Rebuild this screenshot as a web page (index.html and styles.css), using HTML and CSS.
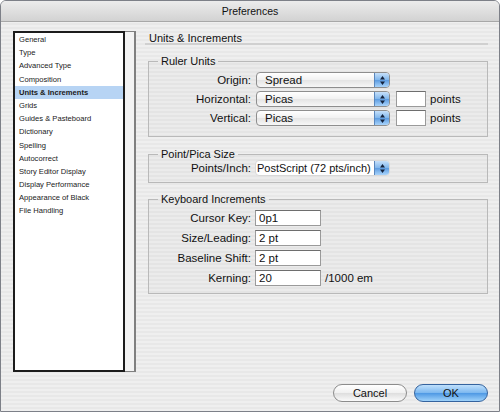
FILE: index.html
```html
<!DOCTYPE html>
<html lang="en">
<head>
    <meta charset="UTF-8">
    <title>Preferences</title>
    <link rel="stylesheet" href="styles.css">
</head>
<body>
<div class="window">
    <div class="titlebar">Preferences</div>

    <div class="content">
        <!-- Список разделов -->
        <div class="sidebar">
            <ul class="list">
                <li>General</li>
                <li>Type</li>
                <li>Advanced Type</li>
                <li>Composition</li>
                <li class="selected">Units &amp; Increments</li>
                <li>Grids</li>
                <li>Guides &amp; Pasteboard</li>
                <li>Dictionary</li>
                <li>Spelling</li>
                <li>Autocorrect</li>
                <li>Story Editor Display</li>
                <li>Display Performance</li>
                <li>Appearance of Black</li>
                <li>File Handling</li>
            </ul>
            <div class="gutter"></div>
        </div>

        <div class="panel">
            <h2 class="panel-title">Units &amp; Increments</h2>

            <fieldset class="group ruler">
                <legend>Ruler Units</legend>
                <div class="row">
                    <label>Origin:</label>
                    <div class="popup"><span>Spread</span><span class="cap"><svg width="7" height="11" viewBox="0 0 7 11"><polygon points="3.5,1 6,4.5 1,4.5"/><polygon points="1,6.5 6,6.5 3.5,10"/></svg></span></div>
                </div>
                <div class="row">
                    <label>Horizontal:</label>
                    <div class="popup"><span>Picas</span><span class="cap"><svg width="7" height="11" viewBox="0 0 7 11"><polygon points="3.5,1 6,4.5 1,4.5"/><polygon points="1,6.5 6,6.5 3.5,10"/></svg></span></div>
                    <input class="field small" type="text" value="">
                    <span class="unit">points</span>
                </div>
                <div class="row">
                    <label>Vertical:</label>
                    <div class="popup"><span>Picas</span><span class="cap"><svg width="7" height="11" viewBox="0 0 7 11"><polygon points="3.5,1 6,4.5 1,4.5"/><polygon points="1,6.5 6,6.5 3.5,10"/></svg></span></div>
                    <input class="field small" type="text" value="">
                    <span class="unit">points</span>
                </div>
            </fieldset>

            <fieldset class="group pica">
                <legend>Point/Pica Size</legend>
                <div class="row">
                    <label>Points/Inch:</label>
                    <div class="popup flat"><span>PostScript (72 pts/inch)</span><span class="cap"><svg width="7" height="11" viewBox="0 0 7 11"><polygon points="3.5,1 6,4.5 1,4.5"/><polygon points="1,6.5 6,6.5 3.5,10"/></svg></span></div>
                </div>
            </fieldset>

            <fieldset class="group keys">
                <legend>Keyboard Increments</legend>
                <div class="row">
                    <label>Cursor Key:</label>
                    <input class="field" type="text" value="0p1">
                </div>
                <div class="row">
                    <label>Size/Leading:</label>
                    <input class="field" type="text" value="2 pt">
                </div>
                <div class="row">
                    <label>Baseline Shift:</label>
                    <input class="field" type="text" value="2 pt">
                </div>
                <div class="row">
                    <label>Kerning:</label>
                    <input class="field" type="text" value="20">
                    <span class="unit">/1000 em</span>
                </div>
            </fieldset>
        </div>
    </div>

    <div class="buttons">
        <button class="btn">Cancel</button>
        <button class="btn default">OK</button>
    </div>
</div>
</body>
</html>
```

FILE: styles.css
```css
* {
    box-sizing: border-box;
}

body {
    margin: 0;
    font-family: "Liberation Sans", Arial, sans-serif;
    color: #111;
}

/* Окно */
.window {
    width: 500px;
    height: 412px;
    border: 1px solid #7d8088;
    border-radius: 6px 6px 0 0;
    overflow: hidden;
    background: repeating-linear-gradient(to bottom, #efefef 0, #efefef 2px, #e8e8e8 2px, #e8e8e8 4px);
}

.titlebar {
    height: 21px;
    line-height: 20px;
    text-align: center;
    font-size: 10.5px;
    border-bottom: 1px solid #a8a8a8;
    background: linear-gradient(to bottom, #ececec, #d2d2d2);
}

.content {
    display: flex;
    padding: 9px 11px 0 12px;
}

/* Левый список */
.sidebar {
    display: flex;
    height: 341px;
}

.list {
    width: 112px;
    margin: 0;
    padding: 0 2px;
    list-style: none;
    background: #fff;
    border: 2px solid #1c1c1c;
}

.list li {
    height: 13.2px;
    line-height: 14px;
    font-size: 7.6px;
    padding-left: 2px;
    white-space: nowrap;
    color: #1a1a1a;
}

.list li.selected {
    background: #b7d4f4;
    font-weight: bold;
    margin: 0 -2px;
    padding-left: 4px;
}

.gutter {
    width: 11px;
    background: #f3f3f3;
    border: 1px solid #808080;
    border-left: none;
    border-right-width: 2px;
}

/* Правая панель */
.panel {
    width: 343px;
    margin-left: 9px;
}

.panel-title {
    margin: 0;
    height: 14px;
    line-height: 15px;
    padding-left: 4px;
    font-size: 11px;
    font-weight: normal;
    border-bottom: 2px solid #d0d0d0;
}

.group {
    width: 340px;
    margin: 10px 0 0 3px;
    padding: 5px 0 10px 0;
    border: 1px solid #b9b9b9;
    background: rgba(0, 0, 0, 0.015);
    display: flex;
    flex-direction: column;
    gap: 3px;
}

.group legend {
    margin-left: 9px;
    padding: 0 3px;
    font-size: 11px;
    line-height: 12px;
}

.group.pica {
    margin-top: 11px;
    padding: 0 0 6px 0;
}

.group.keys {
    padding: 5px 0 7px 0;
    gap: 4px;
}

.row {
    display: flex;
    align-items: center;
    height: 16px;
    font-size: 11.5px;
}

.row label {
    width: 102px;
    margin-right: 4px;
    text-align: right;
    white-space: nowrap;
}

/* Выпадающий список */
.popup {
    display: flex;
    align-items: center;
    width: 134px;
    height: 16px;
    margin-left: 1px;
    border: 1px solid #8e8e8e;
    border-radius: 4px;
    background: linear-gradient(to bottom, #ffffff, #f1f1f1 50%, #e4e4e4 51%, #f7f7f7);
    overflow: hidden;
}

.popup span:first-child {
    flex: 1;
    padding-left: 8px;
    white-space: nowrap;
}

.popup.flat {
    width: 135px;
    margin-left: 0;
    border-color: #d8d8d8;
    background: #fff;
    font-size: 11px;
}

.popup.flat span:first-child {
    padding-left: 1px;
}

.cap {
    flex-shrink: 0;
    width: 15px;
    height: 100%;
    display: flex;
    align-items: center;
    justify-content: center;
    border-left: 1px solid #5a87bd;
    background: linear-gradient(to bottom, #c6e0fa, #7fb6ec 50%, #5c9be0 51%, #a9d4fb);
}

.cap svg {
    fill: #14233d;
}

.field {
    width: 66px;
    height: 16px;
    margin: 0;
    padding: 0 3px;
    border: 1px solid #9a9a9a;
    border-top-color: #6e6e6e;
    background: #fff;
    font-family: "Liberation Sans", Arial, sans-serif;
    font-size: 11.5px;
    color: #111;
}

.field.small {
    width: 30px;
    margin-left: 6px;
}

.unit {
    margin-left: 4px;
}

/* Кнопки */
.buttons {
    display: flex;
    justify-content: flex-end;
    gap: 7px;
    margin-top: 12px;
    padding-right: 11px;
}

.btn {
    width: 74px;
    height: 18px;
    padding: 0;
    border: 1px solid #8c8c8c;
    border-radius: 9px;
    font-family: "Liberation Sans", Arial, sans-serif;
    font-size: 11px;
    color: #111;
    background: linear-gradient(to bottom, #ffffff, #f0f0f0 50%, #dedede 51%, #fafafa);
}

.btn.default {
    border-color: #35639e;
    background: linear-gradient(to bottom, #bfe0fc, #7bb7ef 50%, #4d98e4 51%, #9fd2fa);
}
```
